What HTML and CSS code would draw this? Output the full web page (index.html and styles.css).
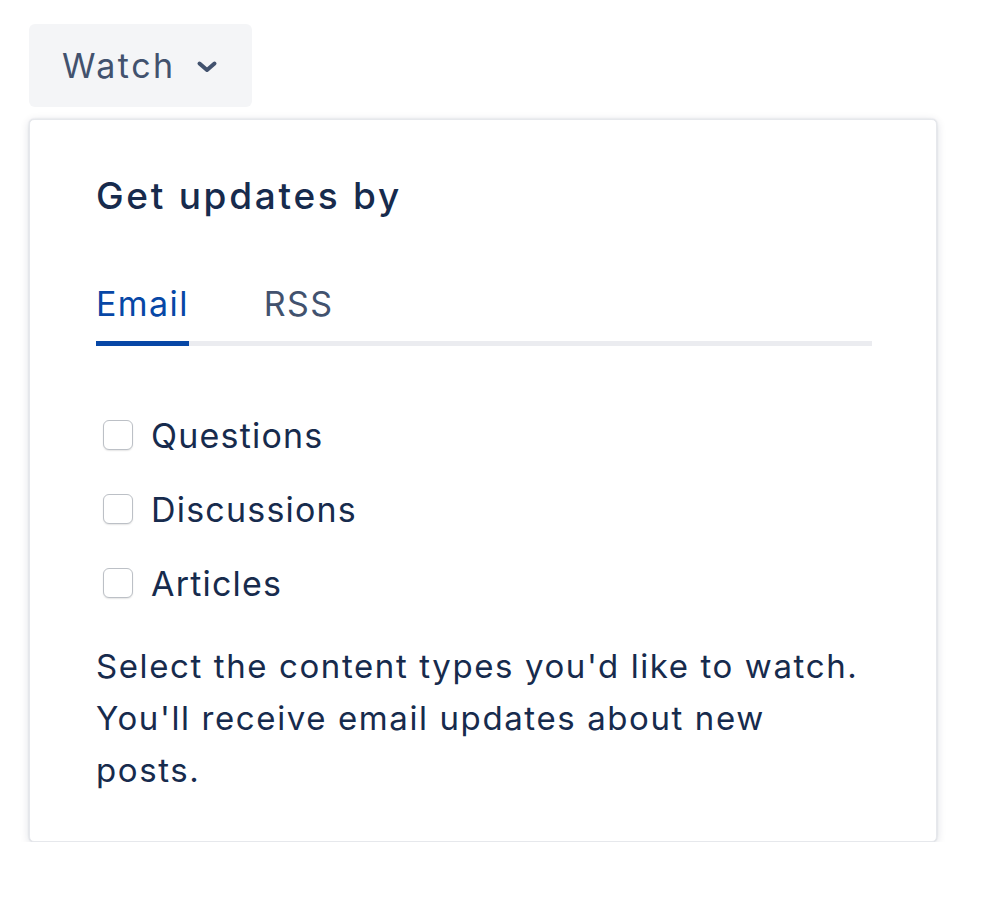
FILE: index.html
```html
<!DOCTYPE html>
<html lang="en">
<head>
<meta charset="utf-8">
<title>Watch</title>
<link rel="stylesheet" href="styles.css">
</head>
<body>
<div class="wrap">
  <button class="watch-btn" type="button">
    <span class="watch-label">Watch</span>
    <svg class="chev" width="24" height="14" viewBox="0 0 24 14" aria-hidden="true">
      <path d="M4.5 3.5 L12 10 L19.5 3.5" fill="none" stroke="#42526e" stroke-width="4" stroke-linecap="round" stroke-linejoin="round"/>
    </svg>
  </button>
  <div class="panel">
    <h2 class="title">Get updates by</h2>
    <div class="tabs">
      <div class="tab active">Email</div>
      <div class="tab">RSS</div>
    </div>
    <ul class="options">
      <li class="option"><span class="box"></span><span class="opt-label">Questions</span></li>
      <li class="option"><span class="box"></span><span class="opt-label">Discussions</span></li>
      <li class="option"><span class="box"></span><span class="opt-label">Articles</span></li>
    </ul>
    <p class="desc">Select the content types you'd like to watch. You'll receive email updates about new posts.</p>
  </div>
</div>
</body>
</html>
```
FILE: styles.css
```css
html, body {
  margin: 0;
  padding: 0;
  background: #ffffff;
}
body {
  font-family: Inter, "Noto Sans", "Liberation Sans", sans-serif;
  color: #172b4d;
}
.wrap {
  padding: 24px 0 0 29px;
  display: flex;
  flex-direction: column;
  align-items: flex-start;
}
.watch-btn {
  width: 223px;
  height: 83px;
  border: 0;
  border-radius: 6px;
  background: #f4f5f7;
  display: flex;
  align-items: center;
  padding: 0 0 0 33px;
  gap: 19px;
  font-family: inherit;
  cursor: pointer;
}
.watch-label {
  font-size: 34px;
  color: #42526e;
  letter-spacing: 2.5px;
}
.chev {
  display: block;
  margin-top: 3px;
}
.panel {
  margin-top: 12px;
  width: 908px;
  height: 723px;
  box-sizing: border-box;
  background: #fff;
  border: 1px solid #e6e8ec;
  border-radius: 5px;
  box-shadow: 0 2px 10px rgba(9, 30, 66, 0.14), 0 0 2px rgba(9, 30, 66, 0.15);
  padding: 54px 64px 0 66px;
}
.title {
  margin: 0;
  font-size: 37px;
  font-weight: 500;
  line-height: 44px;
  letter-spacing: 2.7px;
  color: #172b4d;
}
.tabs {
  margin-top: 64px;
  display: flex;
  gap: 75px;
  border-bottom: 5px solid #ebecf0;
}
.tab {
  font-size: 34px;
  line-height: 44px;
  letter-spacing: 1.4px;
  padding-bottom: 15px;
  color: #42526e;
  margin-bottom: -5px;
  border-bottom: 5px solid transparent;
}
.tab.active {
  color: #0747a6;
  border-bottom-color: #0747a6;
}
.options {
  list-style: none;
  margin: 67px 0 0 0;
  padding: 0;
  display: flex;
  flex-direction: column;
  gap: 30px;
}
.option {
  display: flex;
  align-items: center;
  gap: 18px;
  height: 44px;
}
.box {
  margin-left: 7px;
  width: 28px;
  height: 28px;
  border: 1.5px solid #bcc0c6;
  border-radius: 6px;
  background: #ffffff;
  box-shadow: 0 1px 1.5px rgba(0,0,0,0.1);
}
.opt-label {
  font-size: 34px;
  letter-spacing: 1.2px;
  color: #172b4d;
}
.desc {
  margin: 35px 0 0 0;
  font-size: 33px;
  line-height: 52px;
  letter-spacing: 1.6px;
  color: #172b4d;
}
```
